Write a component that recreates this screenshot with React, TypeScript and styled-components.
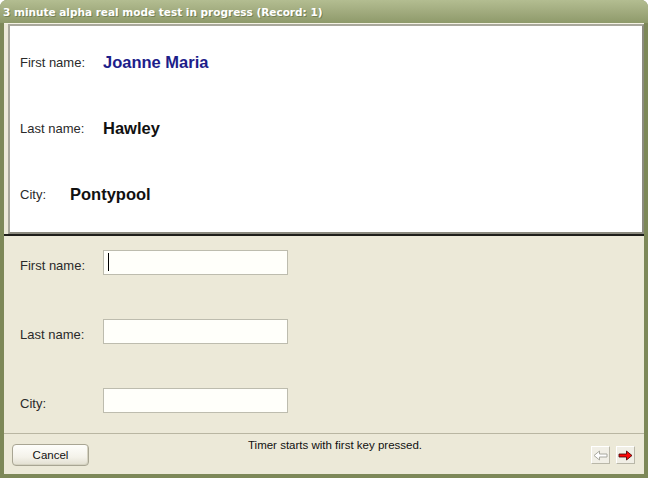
import { createGlobalStyle } from 'styled-components';
import styled from 'styled-components';

const GlobalStyle = createGlobalStyle`
	html, body {
		margin: 0;
		padding: 0;
		background: #ffffff;
	}
	* {
		box-sizing: border-box;
	}
`;

const Window = styled.div`
	width: 648px;
	height: 478px;
	display: flex;
	flex-direction: column;
	background: #7d8858;
	border-radius: 7px 7px 0 0;
	padding: 0 4px 4px 4px;
	font-family: 'Liberation Sans', Arial, sans-serif;
`;

const TitleBar = styled.div`
	height: 23px;
	margin: 0 -4px;
	padding: 5px 0 0 3px;
	border-radius: 7px 7px 0 0;
	background: linear-gradient(#b3bd91 0%, #a3ad80 45%, #8e9a6a 100%);
	color: #ffffff;
	font-family: 'DejaVu Sans', sans-serif;
	font-weight: bold;
	font-size: 10.5px;
	line-height: 14px;
	text-shadow: 1px 1px 0 rgba(80, 92, 50, 0.5);
	white-space: nowrap;
`;

const Client = styled.div`
	flex: 1;
	display: flex;
	flex-direction: column;
	background: #ece9d8;
	border-top: 1px solid #f4f2e4;
`;

const DisplayPanel = styled.div`
	height: 210px;
	margin-left: 4px;
	background: #ffffff;
	border-style: solid;
	border-width: 2px;
	border-color: #a9a89c #8c8b80 #8c8b80 #a9a89c;
	padding: 3px 0 0 10px;
	display: flex;
	flex-direction: column;
`;

const DisplayRow = styled.div`
	height: 66px;
	display: flex;
	align-items: center;
`;

const FieldLabel = styled.span`
	font-size: 13px;
	color: #2a2a2a;
`;

const DisplayLabel = styled(FieldLabel)<{ $width: number }>`
	width: ${({ $width }) => $width}px;
`;

const DisplayValue = styled.span<{ $highlight?: boolean }>`
	font-size: 16.5px;
	font-weight: bold;
	color: ${({ $highlight }) => ($highlight ? '#1d1d8a' : '#111111')};
`;

const Divider = styled.div`
	height: 2px;
	background: #1e1e1a;
`;

const Form = styled.div`
	flex: 1;
	padding: 14px 0 0 16px;
	display: flex;
	flex-direction: column;
	gap: 44px;
`;

const FormRow = styled.div`
	display: flex;
	align-items: flex-start;
`;

const FormLabel = styled(FieldLabel)`
	width: 83px;
	margin-top: 8px;
`;

const InputWrap = styled.div`
	position: relative;
`;

const TextInput = styled.input`
	display: block;
	width: 185px;
	height: 25px;
	margin: 0;
	padding: 2px 4px;
	background: #fffffa;
	border: 1px solid #bdbcae;
	font-family: 'Liberation Sans', Arial, sans-serif;
	font-size: 13px;
	outline: none;
`;

const Caret = styled.span`
	position: absolute;
	left: 5px;
	top: 3px;
	width: 1px;
	height: 18px;
	background: #000000;
`;

const Footer = styled.div`
	height: 41px;
	border-top: 1px solid #b9b6a2;
	display: flex;
	align-items: flex-start;
	padding: 0 9px 0 8px;
`;

const CancelButton = styled.button`
	width: 77px;
	height: 22px;
	margin-top: 10px;
	padding: 0;
	border: 1px solid #a8a593;
	border-radius: 4px;
	background: linear-gradient(#fefefb 0%, #f4f2ea 60%, #e2dfd0 100%);
	box-shadow: inset -1px -1px 0 #d6d3c2;
	font-family: 'Liberation Sans', Arial, sans-serif;
	font-size: 11.5px;
	color: #111111;
`;

const StatusText = styled.div`
	flex: 1;
	margin-top: 5px;
	padding-right: 10px;
	text-align: center;
	font-size: 11.5px;
	color: #111111;
`;

const NavGroup = styled.div`
	display: flex;
	gap: 6px;
	margin-top: 12px;
`;

const NavButton = styled.button`
	width: 19px;
	height: 18px;
	padding: 0;
	display: flex;
	align-items: center;
	justify-content: center;
	background: #f1efe6;
	border-style: solid;
	border-width: 1px;
	border-color: #ffffff #b9b7a8 #b9b7a8 #ffffff;
`;

function ArrowLeft() {
	return (
		<svg width="15" height="11" viewBox="0 0 15 11">
			<path
				d="M1 5.5 L6.5 1 L6.5 4 L14 4 L14 7 L6.5 7 L6.5 10 Z"
				fill="#ffffff"
				stroke="#a9a9a0"
				strokeWidth="1"
			/>
		</svg>
	);
}

function ArrowRight() {
	return (
		<svg width="15" height="11" viewBox="0 0 15 11">
			<path
				d="M14 5.5 L8.5 1 L8.5 4 L1 4 L1 7 L8.5 7 L8.5 10 Z"
				fill="#ff0a0a"
				stroke="#3a0000"
				strokeWidth="0.8"
			/>
		</svg>
	);
}

const displayRows = [
	{ label: 'First name:', value: 'Joanne Maria', width: 83, highlight: true },
	{ label: 'Last name:', value: 'Hawley', width: 83, highlight: false },
	{ label: 'City:', value: 'Pontypool', width: 50, highlight: false },
];

const formFields = ['First name:', 'Last name:', 'City:'];

export default function App() {
	return (
		<>
			<GlobalStyle />
			<Window>
				<TitleBar>3 minute alpha real mode test in progress (Record: 1)</TitleBar>
				<Client>
					<DisplayPanel>
						{displayRows.map((row) => (
							<DisplayRow key={row.label}>
								<DisplayLabel $width={row.width}>{row.label}</DisplayLabel>
								<DisplayValue $highlight={row.highlight}>{row.value}</DisplayValue>
							</DisplayRow>
						))}
					</DisplayPanel>
					<Divider />
					<Form>
						{formFields.map((label, i) => (
							<FormRow key={label}>
								<FormLabel>{label}</FormLabel>
								<InputWrap>
									<TextInput type="text" />
									{i === 0 && <Caret />}
								</InputWrap>
							</FormRow>
						))}
					</Form>
					<Footer>
						<CancelButton>Cancel</CancelButton>
						<StatusText>Timer starts with first key pressed.</StatusText>
						<NavGroup>
							<NavButton>
								<ArrowLeft />
							</NavButton>
							<NavButton>
								<ArrowRight />
							</NavButton>
						</NavGroup>
					</Footer>
				</Client>
			</Window>
		</>
	);
}
